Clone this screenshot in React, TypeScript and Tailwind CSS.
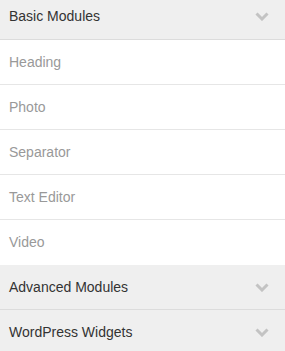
const items = ['Heading', 'Photo', 'Separator', 'Text Editor', 'Video'];

function Chevron() {
  return (
    <svg width="14" height="9" viewBox="0 0 14 9" className="shrink-0">
      <polyline points="1.5,1.5 7,7 12.5,1.5" fill="none" stroke="#c3c3c3" strokeWidth="3" />
    </svg>
  );
}

function SectionHeader({ title, first }: { title: string; first?: boolean }) {
  return (
    <div
      className={`flex items-center justify-between pl-[9px] pr-[16px] bg-[#efefef] border-b border-[#dcdcdc] text-[14px] text-[#333] ${
        first ? 'h-[40px] pb-[7px]' : 'h-[45px]'
      }`}
    >
      <span>{title}</span>
      <Chevron />
    </div>
  );
}

export default function App() {
  return (
    <div className="w-[285px] h-[351px] overflow-hidden bg-white font-['Liberation_Sans',Arial,sans-serif]">
      <SectionHeader title="Basic Modules" first />
      <div>
        {items.map((item, i) => (
          <div
            key={item}
            className={`flex items-center h-[45px] pl-[9px] text-[14px] text-[#999] ${
              i < items.length - 1 ? 'border-b border-[#e6e6e6]' : 'h-[44px]'
            }`}
          >
            {item}
          </div>
        ))}
      </div>
      <SectionHeader title="Advanced Modules" />
      <SectionHeader title="WordPress Widgets" />
    </div>
  );
}
